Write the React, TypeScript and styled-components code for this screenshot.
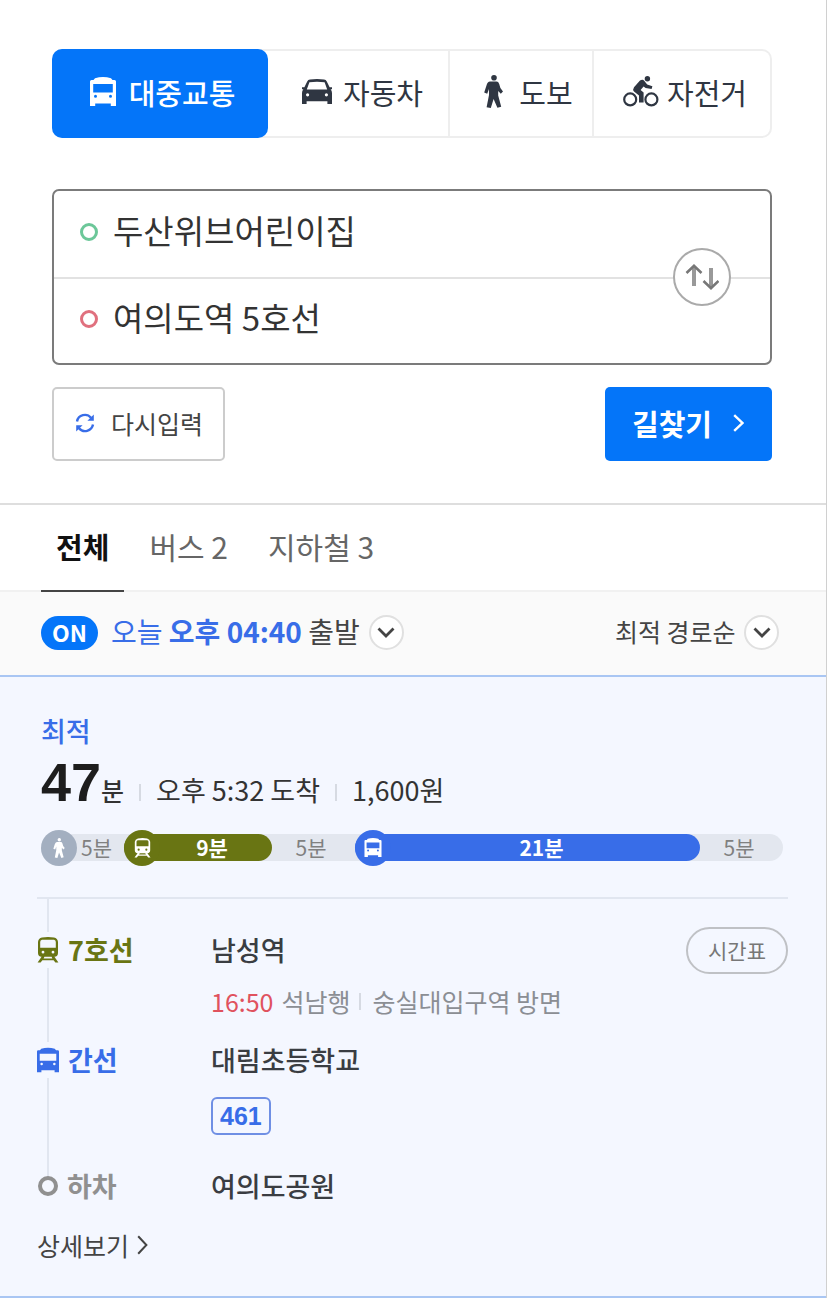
import React, { useState } from "react";
import styled, { createGlobalStyle } from "styled-components";

const GlobalStyle = createGlobalStyle`
  * { box-sizing: border-box; }
  body {
    margin: 0;
    background: #fff;
    color: #333;
    font-family: "Noto Sans CJK KR", "Noto Sans", sans-serif;
  }
  button, input, select { font-family: inherit; color: inherit; }
  button { cursor: pointer; }
`;

const BLUE = "#0475f9";
const ROUTE_BLUE = "#386de8";
const OLIVE = "#697513";
const CARD = "#f4f7ff";

const Panel = styled.main`
  border-right: 1px solid #d0d0d0;
`;

/* ---------- search area ---------- */

const SearchArea = styled.form`
  padding: 49px 54px 42px 52px;
  border-bottom: 2px solid #dedede;
`;

const ModeTabs = styled.div`
  display: grid;
  grid-template-columns: 216fr 182fr 144fr 176fr;
  height: 89px;
  border: 2px solid #eee;
  border-left: 0;
  border-radius: 10px;
`;

const ModeTab = styled.button<{ $active?: boolean }>`
  display: flex;
  align-items: center;
  justify-content: center;
  gap: 8px;
  margin: ${(p) => (p.$active ? "-2px 0" : "0")};
  padding: ${(p) => (p.$active ? "0 0 4px" : "0 0 4px 6px")};
  border: 0;
  border-right: ${(p) => (p.$active ? "0" : "2px solid #eee")};
  border-radius: ${(p) => (p.$active ? "10px" : "0")};
  background: ${(p) => (p.$active ? BLUE : "transparent")};
  color: ${(p) => (p.$active ? "#fff" : "#2f3642")};
  font-size: 29px;
  line-height: 40px;
  font-weight: ${(p) => (p.$active ? 500 : 400)};
  white-space: nowrap;
  &:last-child { border-right: 0; }
`;

const ModeIcon = styled.span`
  display: flex;
  justify-content: center;
  width: 36px;
`;

const Fields = styled.div`
  position: relative;
  margin-top: 51px;
  border: 2px solid #7b7b7b;
  border-radius: 7px;
`;

const Field = styled.label`
  display: flex;
  align-items: center;
  gap: 15px;
  height: 86px;
  padding: 0 100px 4px 26px;
  & + & { border-top: 2px solid #e2e2e2; }
`;

const Ring = styled.span<{ $color: string }>`
  flex: none;
  width: 18px;
  height: 18px;
  border: 3px solid ${(p) => p.$color};
  border-radius: 50%;
`;

const FieldInput = styled.input`
  flex: 1;
  min-width: 0;
  height: 52px;
  padding: 0 0 4px;
  border: 0;
  outline: 0;
  background: transparent;
  color: #333;
  font-size: 33px;
`;

const SwapButton = styled.button`
  position: absolute;
  top: 50%;
  right: 39px;
  display: flex;
  align-items: center;
  justify-content: center;
  width: 58px;
  height: 58px;
  padding: 0;
  border: 2px solid #aaa;
  border-radius: 50%;
  background: #fff;
  color: #777;
  transform: translateY(-50%);
`;

const Actions = styled.div`
  display: flex;
  justify-content: space-between;
  margin-top: 22px;
`;

const ResetButton = styled.button`
  display: flex;
  align-items: center;
  gap: 16px;
  height: 74px;
  padding: 0 20px 2px 21px;
  border: 2px solid #ccc;
  border-radius: 5px;
  background: #fff;
  color: #444;
  font-size: 25px;
  line-height: 36px;
`;

const SubmitButton = styled.button`
  display: flex;
  align-items: center;
  gap: 21px;
  height: 74px;
  padding: 0 28px 2px 27px;
  border: 0;
  border-radius: 5px;
  background: ${BLUE};
  color: #fff;
  font-size: 29px;
  line-height: 40px;
  font-weight: 700;
`;

/* ---------- result filters ---------- */

const ResultTabs = styled.nav`
  display: flex;
  gap: 10px;
  height: 87px;
  padding: 0 41px;
  border-bottom: 2px solid #f1f1f1;
`;

const ResultTab = styled.button<{ $active?: boolean }>`
  height: 87px;
  padding: 0 15px 4px;
  border: 0;
  border-bottom: 2px solid ${(p) => (p.$active ? "#444" : "transparent")};
  background: none;
  color: ${(p) => (p.$active ? "#111" : "#666")};
  font-size: ${(p) => (p.$active ? "29px" : "30px")};
  line-height: 40px;
  font-weight: ${(p) => (p.$active ? 700 : 400)};
`;

const FilterBar = styled.div`
  display: flex;
  align-items: center;
  justify-content: space-between;
  height: 83px;
  padding: 0 47px 2px 41px;
  background: #fafafa;
`;

const Departure = styled.button`
  display: flex;
  align-items: center;
  padding: 0;
  border: 0;
  background: none;
  color: #444;
  font-size: 28px;
  line-height: 40px;
`;

const OnBadge = styled.span`
  display: flex;
  align-items: center;
  justify-content: center;
  width: 57px;
  height: 34px;
  margin-right: 13px;
  padding-bottom: 2px;
  border-radius: 17px;
  background: ${BLUE};
  color: #fff;
  font-size: 23px;
  line-height: 32px;
  font-weight: 700;
`;

const DepartureTime = styled.span`
  margin-right: 9px;
  padding-bottom: 4px;
  white-space: pre;
  em, strong { color: ${ROUTE_BLUE}; font-style: normal; }
  strong { font-weight: 700; }
`;

const RoundArrow = styled.span`
  display: flex;
  align-items: center;
  justify-content: center;
  width: 35px;
  height: 35px;
  border: 2px solid #e0e0e0;
  border-radius: 50%;
  background: #fff;
  color: #444;
`;

const SortLabel = styled.label`
  position: relative;
  display: flex;
  align-items: center;
  ${RoundArrow} {
    position: absolute;
    right: 0;
    pointer-events: none;
  }
`;

const SortSelect = styled.select`
  appearance: none;
  padding: 0 43px 4px 0;
  border: 0;
  background: transparent;
  color: #444;
  font-size: 25px;
  line-height: 36px;
`;

/* ---------- route card ---------- */

const RouteCard = styled.article`
  padding: 35px 38px 33px 37px;
  border-top: 2px solid #a9c6f3;
  border-bottom: 2px solid #a9c6f3;
  background: ${CARD};
`;

const Summary = styled.div`
  padding: 0 5px 36px 4px;
  border-bottom: 2px solid #e1e6f0;
`;

const Rank = styled.h2`
  margin: 0;
  color: ${ROUTE_BLUE};
  font-size: 27px;
  line-height: 38px;
  font-weight: 500;
`;

const Facts = styled.div`
  display: flex;
  align-items: baseline;
  height: 60px;
  margin: 2px 0 22px;
  color: #333;
  font-size: 27px;
  line-height: 36px;
  white-space: nowrap;
`;

const Minutes = styled.strong`
  color: #1d1d1d;
  font-family: "Liberation Sans", Arial, sans-serif;
  font-size: 54px;
  line-height: 60px;
`;

const Unit = styled.span`
  font-size: 25px;
  font-weight: 500;
`;

const Separator = styled.i`
  width: 2px;
  height: 17px;
  margin: 0 15px;
  background: #d6dae2;
`;

const Timeline = styled.div`
  display: flex;
  height: 27px;
  border-radius: 14px;
  background: #e3e7ef;
`;

const Segment = styled.div<{ $fill?: string }>`
  display: flex;
  align-items: center;
  min-width: 0;
  border-radius: 14px;
  background: ${(p) => p.$fill || "transparent"};
  color: ${(p) => (p.$fill ? "#fff" : "#808080")};
  font-size: 21px;
  line-height: 27px;
  font-weight: ${(p) => (p.$fill ? 700 : 400)};
`;

const SegmentIcon = styled.span<{ $color: string }>`
  display: flex;
  flex: none;
  align-items: center;
  justify-content: center;
  width: 36px;
  height: 36px;
  margin-right: -3px;
  border-radius: 50%;
  background: ${(p) => p.$color};
  color: #fff;
`;

const SegmentTime = styled.span`
  flex: 1;
  padding-right: 5px;
  text-align: center;
`;

const Steps = styled.ol`
  position: relative;
  margin: 0;
  padding: 28px 0 0;
  list-style: none;
  &::before {
    content: "";
    position: absolute;
    top: 0;
    bottom: 24px;
    left: 10px;
    width: 2px;
    background: #e1e6f0;
  }
`;

const Step = styled.li`
  position: relative;
  display: grid;
  grid-template-columns: 174px 1fr;
`;

const StepMode = styled.div<{ $color: string }>`
  display: flex;
  align-items: center;
  gap: 9px;
  height: 47px;
  padding-bottom: 2px;
  color: ${(p) => p.$color};
  font-size: 27px;
  line-height: 38px;
  font-weight: 700;
`;

const StepIcon = styled.span`
  display: flex;
  align-items: center;
  justify-content: center;
  width: 22px;
  height: 36px;
  background: ${CARD};
`;

const StopRing = styled(Ring)`
  width: 20px;
  height: 20px;
  margin-left: 1px;
  border-width: 4px;
  background: ${CARD};
`;

const StopHead = styled.div`
  display: flex;
  align-items: center;
  justify-content: space-between;
  height: 47px;
`;

const StopName = styled.h3`
  margin: 0;
  padding-bottom: 2px;
  color: #3a3d42;
  font-size: 27px;
  line-height: 38px;
  font-weight: 500;
`;

const TimetableButton = styled.button`
  width: 102px;
  height: 47px;
  padding: 0 0 2px;
  border: 2px solid #bfc1c5;
  border-radius: 24px;
  background: transparent;
  color: #777;
  font-size: 21px;
  line-height: 30px;
`;

const StopNote = styled.p`
  display: flex;
  align-items: center;
  margin: 8px 0 17px;
  color: #8b8e94;
  font-size: 25px;
  line-height: 38px;
  time { margin-right: 8px; color: #e0525e; }
  ${Separator} { margin: 0 11px 0 9px; }
`;

const RouteNumber = styled.span`
  display: inline-block;
  margin: 13px 0 28px;
  padding: 0 7px;
  border: 2px solid #6f8fe4;
  border-radius: 6px;
  color: ${ROUTE_BLUE};
  font-family: "Liberation Sans", Arial, sans-serif;
  font-size: 25px;
  line-height: 34px;
  font-weight: 700;
`;

const DetailLink = styled.a`
  display: inline-flex;
  align-items: center;
  gap: 8px;
  margin-top: 17px;
  color: #444;
  font-size: 25px;
  line-height: 36px;
  text-decoration: none;
`;

/* ---------- icons ---------- */

const BusIcon = ({ w, h }: { w: number; h: number }) => (
  <svg width={w} height={h} viewBox="0 0 26 29" fill="currentColor" aria-hidden="true">
    <path
      fillRule="evenodd"
      d="M5 1.2Q13-1 21 1.2L22.5 3H24.5Q26 3 26 4.5V29H20.8V26.5H5.2V29H0V4.5Q0 3 1.5 3H3.5ZM3.2 7V15.5H22.8V7ZM4 19.2a1.5 1.5 0 1 0 3 0a1.5 1.5 0 1 0-3 0ZM19 19.2a1.5 1.5 0 1 0 3 0a1.5 1.5 0 1 0-3 0Z"
    />
  </svg>
);

const CarIcon = () => (
  <svg width="30" height="25" viewBox="0 0 30 25" fill="currentColor" aria-hidden="true">
    <path
      fillRule="evenodd"
      d="M5.2 2.4Q6 .8 8 .5Q15-.5 22 .5Q24 .8 24.8 2.4L27.6 8.2H30V10.2H28.6Q30 12 30 14V25H25.4V22.3H4.6V25H0V14Q0 12 1.4 10.2H0V8.2H2.4ZM7.4 3.3L4.8 10.4H25.2L22.6 3.3Q15 2 7.4 3.3ZM4 15.8a1.6 1.6 0 1 0 3.2 0a1.6 1.6 0 1 0-3.2 0ZM22.8 15.8a1.6 1.6 0 1 0 3.2 0a1.6 1.6 0 1 0-3.2 0Z"
    />
  </svg>
);

const WalkIcon = ({ w, h }: { w: number; h: number }) => (
  <svg width={w} height={h} viewBox="0 0 19 33" fill="currentColor" aria-hidden="true">
    <circle cx="10" cy="2.8" r="2.8" />
    <path d="M6 6.6H12.5Q14.4 6.6 15.2 9L16.4 13L19 16.6L16.8 18.8L14.2 16V20.5L17.2 31.8L13.4 32.8L9.6 24L6.8 33L2.6 32.2L5 20V14L3.2 18.8L.2 17.6L2.4 10.8Q3.6 6.6 6 6.6Z" />
  </svg>
);

const BikeIcon = () => (
  <svg width="36" height="31" viewBox="0 0 36 31" fill="none" stroke="currentColor" aria-hidden="true">
    <circle cx="7.2" cy="23.4" r="6" strokeWidth="2.2" />
    <circle cx="28.4" cy="23.4" r="6" strokeWidth="2.2" />
    <circle cx="24.4" cy="2.8" r="2.7" fill="currentColor" stroke="none" />
    <path
      d="M17 4.6Q19.6 2.6 21.4 5L24.2 8.6L29.4 10.2L28.6 13L22.6 12L20.6 10.6L17.6 14L20.6 16.6V26.4H16V19.4L11 15.6Q9.4 13.6 11 11.2Z"
      fill="currentColor"
      stroke="none"
    />
  </svg>
);

const TrainIcon = ({ w, h }: { w: number; h: number }) => (
  <svg width={w} height={h} viewBox="0 0 22 26" fill="currentColor" aria-hidden="true">
    <path
      fillRule="evenodd"
      d="M5 .6Q11-.6 17 .6Q20.6 1.4 21 5V16Q21 19.4 17.4 19.8L21.4 25.4H18.4L16.6 23.2H5.4L3.6 25.4H.6L4.6 19.8Q1 19.4 1 16V5Q1.4 1.4 5 .6ZM5 2.8Q3.2 3.2 3.2 5V10.8H18.8V5Q18.8 3.2 17 2.8ZM4.6 15.2a1.4 1.4 0 1 0 2.8 0a1.4 1.4 0 1 0-2.8 0ZM14.6 15.2a1.4 1.4 0 1 0 2.8 0a1.4 1.4 0 1 0-2.8 0ZM7.4 19.8L6.6 21.4H15.4L14.6 19.8Z"
    />
  </svg>
);

const SwapIcon = () => (
  <svg width="34" height="26" viewBox="0 0 34 26" fill="none" stroke="currentColor" aria-hidden="true">
    <path d="M9 22V3M26 4V23" stroke="#999" strokeWidth="4" />
    <path d="M1.5 9L9 1.8L16.5 9M18.5 17L26 24.2L33.5 17" strokeWidth="2.6" />
  </svg>
);

const RefreshIcon = () => (
  <svg width="20" height="20" viewBox="0 0 20 20" fill="none" stroke={ROUTE_BLUE} strokeWidth="2.4" aria-hidden="true">
    <path d="M2 8.4A8 8 0 0 1 16 4.8M18 11.6A8 8 0 0 1 4 15.2" />
    <path d="M18.8 1.6V7.8H12.4ZM1.2 18.4V12.2H7.6Z" fill={ROUTE_BLUE} stroke="none" />
  </svg>
);

const ChevronDown = () => (
  <svg width="18" height="11" viewBox="0 0 18 11" fill="none" stroke="currentColor" strokeWidth="2.8" aria-hidden="true">
    <path d="M1.5 1.5L9 9L16.5 1.5" />
  </svg>
);

const ChevronRight = ({ h, stroke }: { h: number; stroke: number }) => (
  <svg width="11" height={h} viewBox={`0 0 11 ${h}`} fill="none" stroke="currentColor" strokeWidth={stroke} aria-hidden="true">
    <path d={`M1.2 1.2L9.4 ${h / 2}L1.2 ${h - 1.2}`} />
  </svg>
);

const modes = [
  { name: "대중교통", icon: <BusIcon w={26} h={29} /> },
  { name: "자동차", icon: <CarIcon /> },
  { name: "도보", icon: <WalkIcon w={19} h={33} /> },
  { name: "자전거", icon: <BikeIcon /> },
];

const segments = [
  { span: 83, time: "5분", color: "#a3afc0", icon: <WalkIcon w={12} h={20} /> },
  { span: 148, time: "9분", color: OLIVE, fill: OLIVE, icon: <TrainIcon w={17} h={20} /> },
  { span: 83, time: "5분" },
  { span: 345, time: "21분", color: ROUTE_BLUE, fill: ROUTE_BLUE, icon: <BusIcon w={18} h={19} /> },
  { span: 83, time: "5분" },
];

export default function App() {
  const [from, setFrom] = useState("두산위브어린이집");
  const [to, setTo] = useState("여의도역 5호선");
  const swap = () => {
    setFrom(to);
    setTo(from);
  };
  const reset = () => {
    setFrom("");
    setTo("");
  };

  return (
    <Panel>
      <GlobalStyle />
      <SearchArea onSubmit={(e) => e.preventDefault()}>
        <ModeTabs>
          {modes.map((m, i) => (
            <ModeTab key={m.name} type="button" $active={i === 0} aria-pressed={i === 0}>
              <ModeIcon>{m.icon}</ModeIcon>
              {m.name}
            </ModeTab>
          ))}
        </ModeTabs>
        <Fields>
          <Field>
            <Ring $color="#6cc799" />
            <FieldInput aria-label="출발지" value={from} onChange={(e) => setFrom(e.target.value)} />
          </Field>
          <Field>
            <Ring $color="#e0707e" />
            <FieldInput aria-label="도착지" value={to} onChange={(e) => setTo(e.target.value)} />
          </Field>
          <SwapButton type="button" aria-label="출발지 도착지 바꾸기" onClick={swap}>
            <SwapIcon />
          </SwapButton>
        </Fields>
        <Actions>
          <ResetButton type="button" onClick={reset}>
            <RefreshIcon />
            다시입력
          </ResetButton>
          <SubmitButton type="submit">
            길찾기
            <ChevronRight h={18} stroke={2.4} />
          </SubmitButton>
        </Actions>
      </SearchArea>

      <ResultTabs>
        <ResultTab type="button" $active>전체</ResultTab>
        <ResultTab type="button">버스 2</ResultTab>
        <ResultTab type="button">지하철 3</ResultTab>
      </ResultTabs>

      <FilterBar>
        <Departure type="button">
          <OnBadge>ON</OnBadge>
          <DepartureTime>
            <em>오늘 </em>
            <strong>오후 04:40</strong> 출발
          </DepartureTime>
          <RoundArrow><ChevronDown /></RoundArrow>
        </Departure>
        <SortLabel>
          <SortSelect aria-label="정렬" defaultValue="best">
            <option value="best">최적 경로순</option>
          </SortSelect>
          <RoundArrow><ChevronDown /></RoundArrow>
        </SortLabel>
      </FilterBar>

      <RouteCard>
        <Summary>
          <Rank>최적</Rank>
          <Facts>
            <Minutes>47</Minutes>
            <Unit>분</Unit>
            <Separator />
            <span>오후 5:32 도착</span>
            <Separator />
            <span>1,600원</span>
          </Facts>
          <Timeline>
            {segments.map((s, i) => (
              <Segment key={i} $fill={s.fill} style={{ flex: `${s.span} 1 0` }}>
                {s.icon && <SegmentIcon $color={s.color!}>{s.icon}</SegmentIcon>}
                <SegmentTime>{s.time}</SegmentTime>
              </Segment>
            ))}
          </Timeline>
        </Summary>

        <Steps>
          <Step>
            <StepMode $color={OLIVE}>
              <StepIcon><TrainIcon w={22} h={26} /></StepIcon>
              7호선
            </StepMode>
            <div>
              <StopHead>
                <StopName>남성역</StopName>
                <TimetableButton type="button">시간표</TimetableButton>
              </StopHead>
              <StopNote>
                <time>16:50</time>
                석남행
                <Separator />
                숭실대입구역 방면
              </StopNote>
            </div>
          </Step>
          <Step>
            <StepMode $color={ROUTE_BLUE}>
              <StepIcon><BusIcon w={22} h={26} /></StepIcon>
              간선
            </StepMode>
            <div>
              <StopHead>
                <StopName>대림초등학교</StopName>
              </StopHead>
              <RouteNumber>461</RouteNumber>
            </div>
          </Step>
          <Step>
            <StepMode $color="#909090">
              <StopRing $color="#909090" />
              하차
            </StepMode>
            <StopHead>
              <StopName>여의도공원</StopName>
            </StopHead>
          </Step>
        </Steps>
        <DetailLink href="#detail">
          상세보기
          <ChevronRight h={20} stroke={2} />
        </DetailLink>
      </RouteCard>
    </Panel>
  );
}
